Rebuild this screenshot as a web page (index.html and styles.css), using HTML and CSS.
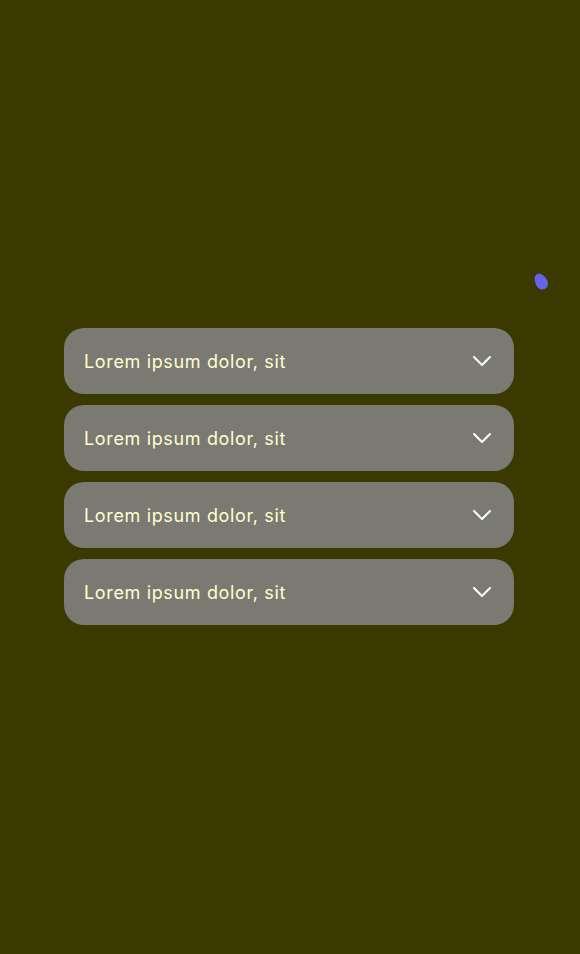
FILE: index.html
```html
<!DOCTYPE html>
<html>
<head>
<meta charset="utf-8">
<link rel="stylesheet" href="styles.css">
</head>
<body>
<div class="page">
  <div class="blob"></div>
  <div class="list">
    <div class="item"><span class="label">Lorem ipsum dolor, sit</span><svg class="chev" viewBox="0 0 18 10" width="18" height="10"><path d="M1 1 L9 9 L17 1" fill="none" stroke="#fff" stroke-width="2" stroke-linecap="round" stroke-linejoin="round"/></svg></div>
    <div class="item"><span class="label">Lorem ipsum dolor, sit</span><svg class="chev" viewBox="0 0 18 10" width="18" height="10"><path d="M1 1 L9 9 L17 1" fill="none" stroke="#fff" stroke-width="2" stroke-linecap="round" stroke-linejoin="round"/></svg></div>
    <div class="item"><span class="label">Lorem ipsum dolor, sit</span><svg class="chev" viewBox="0 0 18 10" width="18" height="10"><path d="M1 1 L9 9 L17 1" fill="none" stroke="#fff" stroke-width="2" stroke-linecap="round" stroke-linejoin="round"/></svg></div>
    <div class="item"><span class="label">Lorem ipsum dolor, sit</span><svg class="chev" viewBox="0 0 18 10" width="18" height="10"><path d="M1 1 L9 9 L17 1" fill="none" stroke="#fff" stroke-width="2" stroke-linecap="round" stroke-linejoin="round"/></svg></div>
  </div>
</div>
</body>
</html>
```

FILE: styles.css
```css
html, body {
  margin: 0;
  padding: 0;
  background: #393900;
}
.page {
  position: relative;
  width: 580px;
  height: 954px;
  padding-top: 328px;
  box-sizing: border-box;
}
.blob {
  position: absolute;
  left: 535px;
  top: 273px;
  width: 12px;
  height: 17px;
  background: #6464e6;
  border-radius: 50% 50% 50% 50% / 60% 60% 40% 40%;
  transform: rotate(-30deg);
}
.list {
  margin-left: 64px;
  width: 450px;
  display: flex;
  flex-direction: column;
  gap: 11px;
}
.item {
  height: 66px;
  border-radius: 20px;
  background: #7a7a72;
  display: flex;
  align-items: center;
  justify-content: space-between;
  padding: 0 23px 0 20px;
  box-sizing: border-box;
}
.label {
  font-family: "Inter", "Noto Sans", sans-serif;
  font-size: 18px;
  color: #ffffd0;
  letter-spacing: 0.65px;
}
.chev {
  display: block;
}
```
